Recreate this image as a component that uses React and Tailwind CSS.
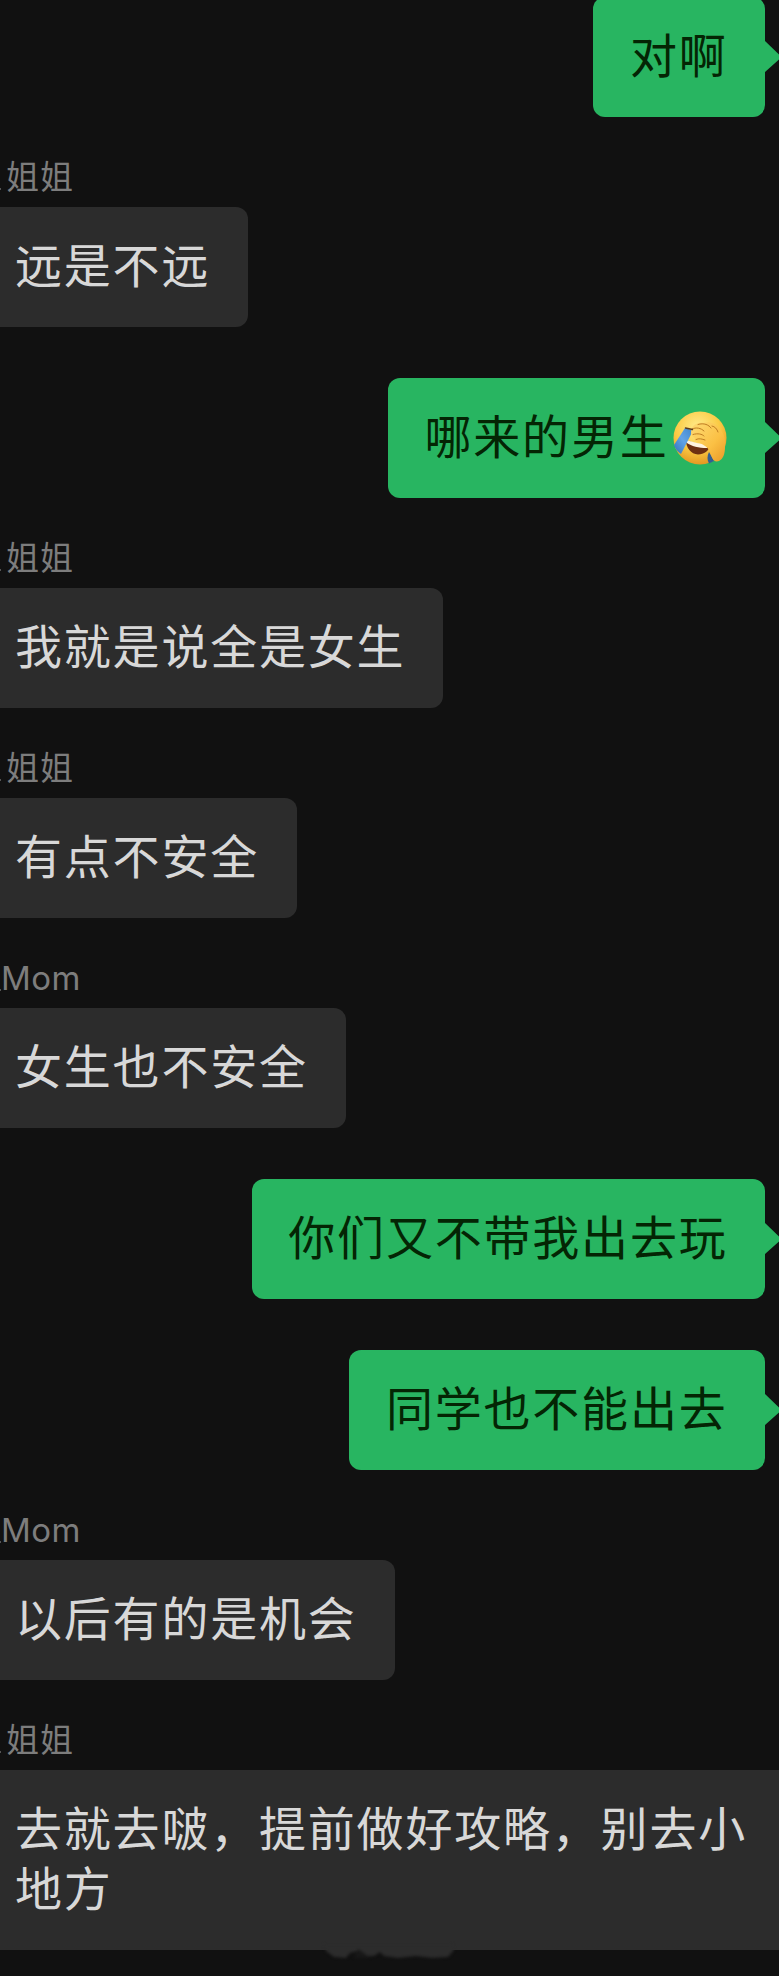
const messages = [
  { from: 'me', text: '对啊' },
  { from: '姐姐', text: '远是不远' },
  { from: 'me', text: '哪来的男生', emoji: true },
  { from: '姐姐', text: '我就是说全是女生' },
  { from: '姐姐', text: '有点不安全' },
  { from: 'Mom', text: '女生也不安全' },
  { from: 'me', text: '你们又不带我出去玩' },
  { from: 'me', text: '同学也不能出去' },
  { from: 'Mom', text: '以后有的是机会' },
  { from: '姐姐', text: '去就去啵，提前做好攻略，别去小地方', wide: true },
]

function FacepalmEmoji() {
  return (
    <svg viewBox="0 0 54 54" className="w-[54px] h-[54px] shrink-0 ml-[4px] mr-[1px]">
      <defs>
        <radialGradient id="face" cx="0.45" cy="0.3" r="0.75">
          <stop offset="0" stopColor="#ffec8c" />
          <stop offset="0.55" stopColor="#fbcb45" />
          <stop offset="1" stopColor="#e0901c" />
        </radialGradient>
        <linearGradient id="hand" x1="0" y1="0" x2="1" y2="1">
          <stop offset="0" stopColor="#fedb74" />
          <stop offset="0.6" stopColor="#fbc044" />
          <stop offset="1" stopColor="#e99a28" />
        </linearGradient>
        <linearGradient id="tear" x1="1" y1="0" x2="0" y2="1">
          <stop offset="0" stopColor="#3f86cc" />
          <stop offset="0.5" stopColor="#62a3e6" />
          <stop offset="1" stopColor="#2f6fb8" />
        </linearGradient>
      </defs>
      <circle cx="27" cy="27" r="26.5" fill="url(#face)" />
      {/* mouth */}
      <path d="M13 29 C20 32 28 34 37 34 C36 40 31 43.5 25 43.5 C18 43 13 37 13 29Z" fill="#6e3012" />
      <path d="M13 29 C20 31 28 33 35 34 L34 37 C26 37 18 35 14 32Z" fill="#fff3df" />
      {/* tears */}
      <path d="M12 17 L20 19.5 L8 43 C5 41 2 38 1 34Z" fill="url(#tear)" />
      <path d="M36 41 L41 50 L36 52.5 C34 49 34 45 36 41Z" fill="#335f92" />
      {/* hand */}
      <path
        d="M19 18 C19 14 25 11 31 12 C37 10 44 13 47 18 C51 23 53 29 52 36 C52 43 50 48 46 50 C40 52 39 46 37 41 C36 37 31 34 27 32 C23 31 21 29 22 27 C18 25 17 21 19 18Z"
        fill="url(#hand)"
      />
      <path
        d="M19 18 C23 16 28 17 31 20 M20 23.5 C25 22 29 23 31 25 M23 28.5 C26 27 29 28 32 29 M25 13.5 C31 11.5 36 14 38 17 M39 15 C42 15.5 44 18 45 21"
        fill="none"
        stroke="#b8741c"
        strokeWidth="0.9"
        strokeLinecap="round"
      />
      <path d="M12.5 17 L19.5 18.5" stroke="#5c3a1c" strokeWidth="1.4" strokeLinecap="round" />
    </svg>
  )
}

function SentBubble({ message }) {
  return (
    <div className="flex justify-end items-center pr-[14px]">
      <div className="relative flex items-center h-[120px] pl-[36.5px] pr-[37.5px] rounded-xl bg-[#28b561] text-[#042504]">
        <span className="pb-[8px]">{message.text}</span>
        {message.emoji && <FacepalmEmoji />}
        <svg viewBox="0 0 14 34" className="absolute left-full top-[43px] w-[14px] h-[34px]">
          <path d="M-1 0 L0 1 L14 14.5 V19.5 L0 32 L-1 34Z" fill="#28b561" />
        </svg>
      </div>
    </div>
  )
}

function ReceivedBubble({ message }) {
  const isMom = message.from === 'Mom'

  return (
    <div className="flex flex-col items-start">
      <div className="flex items-end h-[39px] text-[33px] leading-[39px] text-[#7d7d7d]">
        {/* end of the clipped name prefix */}
        <span className={`w-px h-[2px] bg-[#555555] mb-[17px] ${isMom ? '' : 'mr-[5px]'}`} />
        <span
          className={
            isMom
              ? "pb-[10px] tracking-[0.5px] font-[Inter,'Noto_Sans_CJK_SC',sans-serif]"
              : 'pb-[12px] tracking-[1px]'
          }
        >
          {message.from}
        </span>
      </div>
      <div
        className={`bg-[#2c2c2c] text-[#d8d8d8] pl-[15px] ${
          message.wide ? 'w-full h-[180px] pt-[26px]' : 'flex items-center h-[120px] pr-[38px] pb-[8px] rounded-r-xl'
        }`}
      >
        {message.text}
      </div>
    </div>
  )
}

function Watermark() {
  return (
    <svg viewBox="0 0 140 30" className="absolute left-[320px] top-[1936px] w-[140px] h-[30px] blur-[1.5px]">
      <path
        d="M4 8 L132 8 L134 14 L128 21 L112 22 L96 20 L78 22 L64 20 L60 16 L54 20 L44 20 L38 15 L30 17 L26 22 L14 21 L6 15Z"
        fill="#2c2c2c"
      />
      <path d="M34 22 L38 13 L44 17 L50 22Z" fill="#181818" />
    </svg>
  )
}

export default function App() {
  return (
    <div className="relative w-full h-[1976px] overflow-hidden bg-[#111111] font-['Noto_Sans_CJK_SC',sans-serif] text-[47px] leading-[60px] tracking-[1.8px]">
      <div className="flex flex-col gap-[51px] -mt-[3px]">
        {messages.map((message, i) =>
          message.from === 'me' ? (
            <SentBubble key={i} message={message} />
          ) : (
            <ReceivedBubble key={i} message={message} />
          )
        )}
      </div>
      <Watermark />
    </div>
  )
}
